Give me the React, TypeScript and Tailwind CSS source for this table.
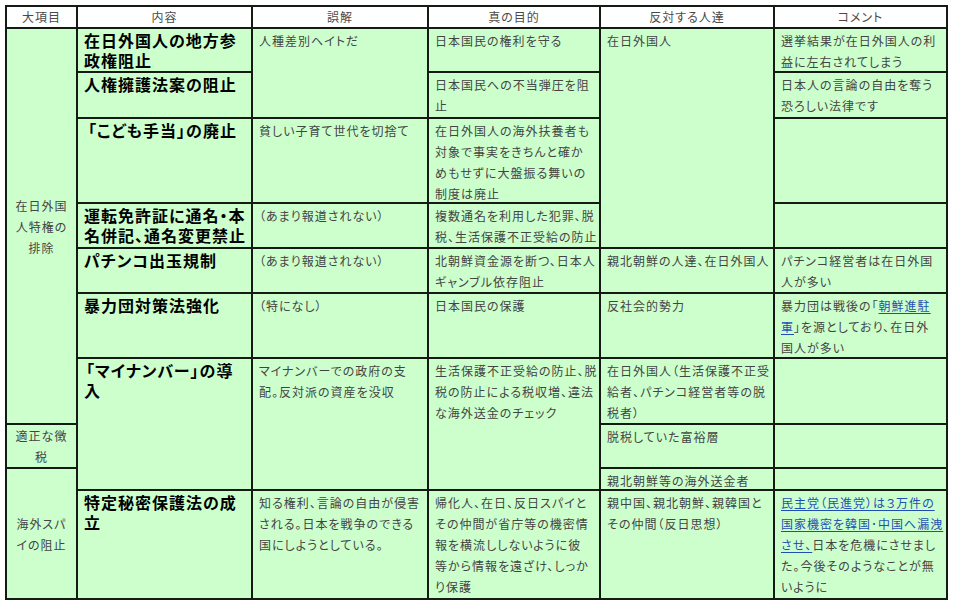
import type { ReactNode } from "react";

type Cell = {
    lines: ReactNode[];
    span?: string;
    kind?: "head" | "side" | "title" | "body";
};

const Link = ({ children }: { children: ReactNode }) => (
    <span className="text-[#1f4fb4] underline underline-offset-2">{children}</span>
);

const cells: Cell[] = [
    // header
    { kind: "head", lines: ["大項目"] },
    { kind: "head", lines: ["内容"] },
    { kind: "head", lines: ["誤解"] },
    { kind: "head", lines: ["真の目的"] },
    { kind: "head", lines: ["反対する人達"] },
    { kind: "head", lines: ["コメント"] },

    // row A
    { kind: "side", span: "row-span-7", lines: ["在日外国", "人特権の", "排除"] },
    { kind: "title", lines: ["在日外国人の地方参", "政権阻止"] },
    { span: "row-span-2", lines: ["人種差別ヘイトだ"] },
    { lines: ["日本国民の権利を守る"] },
    { span: "row-span-4", lines: ["在日外国人"] },
    { lines: ["選挙結果が在日外国人の利", "益に左右されてしまう"] },

    // row B
    { kind: "title", lines: ["人権擁護法案の阻止"] },
    { lines: ["日本国民への不当弾圧を阻", "止"] },
    { lines: ["日本人の言論の自由を奪う", "恐ろしい法律です"] },

    // row C
    { kind: "title", lines: [<span className="ml-[4px]">「こども手当」の廃止</span>] },
    { lines: ["貧しい子育て世代を切捨て"] },
    {
        lines: [
            "在日外国人の海外扶養者も",
            "対象で事実をきちんと確か",
            "めもせずに大盤振る舞いの",
            "制度は廃止",
        ],
    },
    { lines: [] },

    // row D
    { kind: "title", lines: ["運転免許証に通名・本", "名併記、通名変更禁止"] },
    { lines: ["（あまり報道されない）"] },
    { lines: ["複数通名を利用した犯罪、脱", "税、生活保護不正受給の防止"] },
    { lines: [] },

    // row E
    { kind: "title", lines: ["パチンコ出玉規制"] },
    { lines: ["（あまり報道されない）"] },
    { lines: ["北朝鮮資金源を断つ、日本人", "ギャンブル依存阻止"] },
    { lines: ["親北朝鮮の人達、在日外国人"] },
    { lines: ["パチンコ経営者は在日外国", "人が多い"] },

    // row F
    { kind: "title", lines: ["暴力団対策法強化"] },
    { lines: ["（特になし）"] },
    { lines: ["日本国民の保護"] },
    { lines: ["反社会的勢力"] },
    {
        lines: [
            <>暴力団は戦後の「<Link>朝鮮進駐</Link></>,
            <><Link>軍</Link>」を源としており、在日外</>,
            "国人が多い",
        ],
    },

    // row G
    { kind: "title", span: "row-span-3", lines: [<span className="ml-[2px]">「マイナンバー」の導</span>, "入"] },
    { span: "row-span-3", lines: ["マイナンバーでの政府の支", "配。反対派の資産を没収"] },
    {
        span: "row-span-3",
        lines: ["生活保護不正受給の防止、脱", "税の防止による税収増、違法", "な海外送金のチェック"],
    },
    { lines: ["在日外国人（生活保護不正受", "給者、パチンコ経営者等の脱", "税者）"] },
    { lines: [] },

    // row H
    { kind: "side", lines: ["適正な徴", "税"] },
    { lines: ["脱税していた富裕層"] },
    { lines: [] },

    // row I
    { kind: "side", span: "row-span-2", lines: ["海外スパ", "イの阻止"] },
    { lines: ["親北朝鮮等の海外送金者"] },
    { lines: [] },

    // row J
    { kind: "title", lines: ["特定秘密保護法の成", "立"] },
    { lines: ["知る権利、言論の自由が侵害", "される。日本を戦争のできる", "国にしようとしている。"] },
    {
        lines: [
            "帰化人、在日、反日スパイと",
            "その仲間が省庁等の機密情",
            "報を横流ししないように彼",
            "等から情報を遠ざけ、しっか",
            "り保護",
        ],
    },
    { lines: ["親中国、親北朝鮮、親韓国と", "その仲間（反日思想）"] },
    {
        lines: [
            <Link>民主党（民進党）は３万件の</Link>,
            <Link>国家機密を韓国･中国へ漏洩</Link>,
            <><Link>させ、</Link>日本を危機にさせまし</>,
            "た。今後そのようなことが無",
            "いように",
        ],
    },
];

const styles = {
    head: "bg-white flex flex-col items-center justify-center text-[12px] leading-[20px] text-[#4a4a4a]",
    side: "bg-[#ccffcc] flex flex-col items-center justify-center text-[12px] leading-[21px] text-[#444]",
    title: "bg-[#ccffcc] pl-[6px] pt-[1px] text-[16px] leading-[20px] font-bold text-black",
    body: "bg-[#ccffcc] pl-[6px] pt-px text-[12px] leading-[21px] text-[#444]",
};

export default function App() {
    return (
        <div
            className="min-h-screen bg-white pt-[3px] pl-[5px] [font-feature-settings:'palt'] tracking-[1px]"
            style={{ fontFamily: '"Noto Sans CJK JP", "Noto Sans", sans-serif' }}
        >
            <div className="inline-grid grid-cols-[69px_173px_174px_170px_172px_171px] grid-rows-[20px_42px_44px_83px_43px_43px_63px_64px_42px_20px_107px] gap-[2px] p-[2px] bg-[#141a14]">
                {cells.map((c, i) => (
                    <div
                        key={i}
                        className={`${styles[c.kind ?? "body"]} ${c.span ?? ""} overflow-hidden whitespace-nowrap`}
                    >
                        {c.lines.map((l, j) => (
                            <div key={j}>{l}</div>
                        ))}
                    </div>
                ))}
            </div>
        </div>
    );
}
